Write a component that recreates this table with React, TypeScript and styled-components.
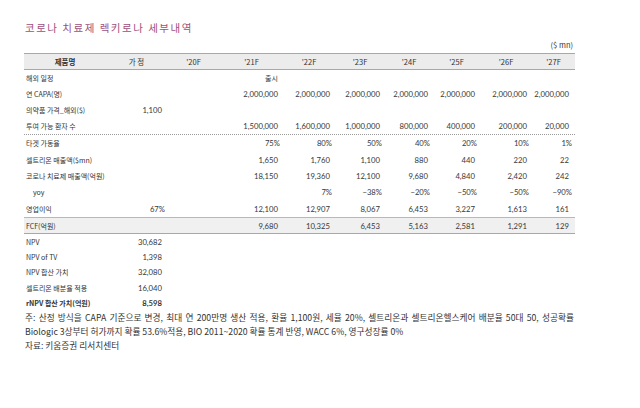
import React from "react";
import styled, { createGlobalStyle } from "styled-components";

const Global = createGlobalStyle`
  html, body { margin: 0; padding: 0; background: #ffffff; }
  body { font-family: "Noto Sans CJK KR", "Noto Sans", sans-serif; color: #333; }
`;

const COLS = "82px 61px 53px 63px 52px 50px 48px 47px 52px 43px";

const Page = styled.div`
  width: 551px;
  padding: 21px 0 0 24px;
`;

const Title = styled.div`
  font-size: 10.5px;
  line-height: 14px;
  height: 14px;
  letter-spacing: 1.5px;
  color: #9e4f7b;
  padding-left: 1px;
  white-space: nowrap;
`;

const Unit = styled.div`
  margin-top: 5px;
  height: 10px;
  line-height: 10px;
  font-size: 7.5px;
  text-align: right;
  padding-right: 2px;
  color: #333;
`;

const Table = styled.div`
  margin-top: 3px;
  display: flex;
  flex-direction: column;
`;

const HeaderRow = styled.div`
  display: grid;
  grid-template-columns: ${COLS};
  height: 15px;
  align-items: center;
  background: #ececec;
  border-top: 1.5px solid #a8a8a8;
  border-bottom: 1.5px solid #a8a8a8;
`;

const HeadCell = styled.div<{ $bold?: boolean }>`
  text-align: center;
  font-size: 7.5px;
  font-weight: ${(p) => (p.$bold ? 700 : 400)};
  white-space: nowrap;
  color: #333;
`;

const Row = styled.div<{ $h: number; $dotted?: boolean; $band?: boolean }>`
  display: grid;
  grid-template-columns: ${COLS};
  height: ${(p) => p.$h}px;
  align-items: center;
  border-bottom: ${(p) =>
    p.$dotted ? "1px dotted #9a9a9a" : p.$band ? "1.5px solid #a8a8a8" : "none"};
  border-top: ${(p) => (p.$band ? "1px solid #b8b8b8" : "none")};
  background: ${(p) => (p.$band ? "#f0f0f0" : "transparent")};
`;

const Label = styled.div<{ $indent?: boolean; $bold?: boolean }>`
  font-size: 7px;
  white-space: nowrap;
  padding-left: ${(p) => (p.$indent ? 9 : 2)}px;
  font-weight: ${(p) => (p.$bold ? 700 : 400)};
  color: #333;
`;

const Value = styled.div<{ $pad: number; $bold?: boolean; $kr?: boolean }>`
  text-align: right;
  padding-right: ${(p) => p.$pad}px;
  font-family: ${(p) => (p.$kr ? `"Noto Sans CJK KR", sans-serif` : `Lato, "Noto Sans CJK KR", sans-serif`)};
  font-size: ${(p) => (p.$kr ? 7 : 7.7)}px;
  font-weight: ${(p) => (p.$bold ? 700 : 400)};
  white-space: nowrap;
  color: #383838;
`;

const Notes = styled.div`
  display: flex;
  flex-direction: column;
  width: 550px;
`;

const NoteLine = styled.div<{ $justify?: boolean }>`
  font-size: 8.7px;
  line-height: 14px;
  height: 14px;
  white-space: ${(p) => (p.$justify ? "normal" : "nowrap")};
  overflow: hidden;
  text-align: ${(p) => (p.$justify ? "justify" : "left")};
  text-align-last: ${(p) => (p.$justify ? "justify" : "auto")};
  padding-left: 1px;
  color: #333;
`;

type RowData = {
  label: string;
  vals: string[];
  h: number;
  indent?: boolean;
  dotted?: boolean;
  band?: boolean;
  bold?: boolean;
};

const E = "";
const rows: RowData[] = [
  { label: "해외 일정", h: 16, vals: [E, E, "출시", E, E, E, E, E, E] },
  {
    label: "연 CAPA(명)",
    h: 16,
    vals: [E, E, "2,000,000", "2,000,000", "2,000,000", "2,000,000", "2,000,000", "2,000,000", "2,000,000"],
  },
  { label: "의약품 가격_해외($)", h: 16, vals: ["1,100", E, E, E, E, E, E, E, E] },
  {
    label: "투여 가능 환자 수",
    h: 16,
    dotted: true,
    vals: [E, E, "1,500,000", "1,600,000", "1,000,000", "800,000", "400,000", "200,000", "20,000"],
  },
  { label: "타겟 가동율", h: 16.4, vals: [E, E, "75%", "80%", "50%", "40%", "20%", "10%", "1%"] },
  { label: "셀트리온 매출액($mn)", h: 16.4, vals: [E, E, "1,650", "1,760", "1,100", "880", "440", "220", "22"] },
  {
    label: "코로나 치료제 매출액(억원)",
    h: 16.4,
    vals: [E, E, "18,150", "19,360", "12,100", "9,680", "4,840", "2,420", "242"],
  },
  { label: "yoy", h: 16.4, indent: true, vals: [E, E, E, "7%", "−38%", "−20%", "−50%", "−50%", "−90%"] },
  {
    label: "영업이익",
    h: 16.4,
    vals: ["67%", E, "12,100", "12,907", "8,067", "6,453", "3,227", "1,613", "161"],
  },
  {
    label: "FCF(억원)",
    h: 15.5,
    band: true,
    vals: [E, E, "9,680", "10,325", "6,453", "5,163", "2,581", "1,291", "129"],
  },
  { label: "NPV", h: 15.2, vals: ["30,682", E, E, E, E, E, E, E, E] },
  { label: "NPV of TV", h: 15.2, vals: ["1,398", E, E, E, E, E, E, E, E] },
  { label: "NPV 합산 가치", h: 15.2, vals: ["32,080", E, E, E, E, E, E, E, E] },
  { label: "셀트리온 배분율 적용", h: 15.2, vals: ["16,040", E, E, E, E, E, E, E, E] },
  { label: "rNPV 합산 가치(억원)", h: 16, bold: true, vals: ["8,598", E, E, E, E, E, E, E, E] },
];

const headers = ["가 정", "'20F", "'21F", "'22F", "'23F", "'24F", "'25F", "'26F", "'27F"];

const padFor = (v: string, col: number) => {
  if (v.endsWith("%")) return col === 0 ? 2 : 3;
  if (col === 8) return 6;
  return 5;
};

const isKr = (v: string) => /[가-힣]/.test(v);

export default function App() {
  return (
    <>
      <Global />
      <Page>
        <Title>코로나 치료제 렉키로나 세부내역</Title>
        <Unit>($ mn)</Unit>
        <Table>
          <HeaderRow>
            <HeadCell $bold>제품명</HeadCell>
            {headers.map((h) => (
              <HeadCell key={h}>{h}</HeadCell>
            ))}
          </HeaderRow>
          {rows.map((r) => (
            <Row key={r.label} $h={r.h} $dotted={r.dotted} $band={r.band}>
              <Label $indent={r.indent} $bold={r.bold}>
                {r.label}
              </Label>
              {r.vals.map((v, i) => (
                <Value key={i} $pad={padFor(v, i)} $bold={r.bold} $kr={isKr(v)}>
                  {v}
                </Value>
              ))}
            </Row>
          ))}
        </Table>
        <Notes>
          <NoteLine $justify>
            주: 산정 방식을 CAPA 기준으로 변경, 최대 연 200만명 생산 적용, 환율 1,100원, 세율 20%, 셀트리온과 셀트리온헬스케어 배분율 50대 50, 성공확률
          </NoteLine>
          <NoteLine>
            Biologic 3상부터 허가까지 확률 53.6%적용, BIO 2011~2020 확률 통계 반영, WACC 6%, 영구성장률 0%
          </NoteLine>
          <NoteLine>자료: 키움증권 리서치센터</NoteLine>
        </Notes>
      </Page>
    </>
  );
}
